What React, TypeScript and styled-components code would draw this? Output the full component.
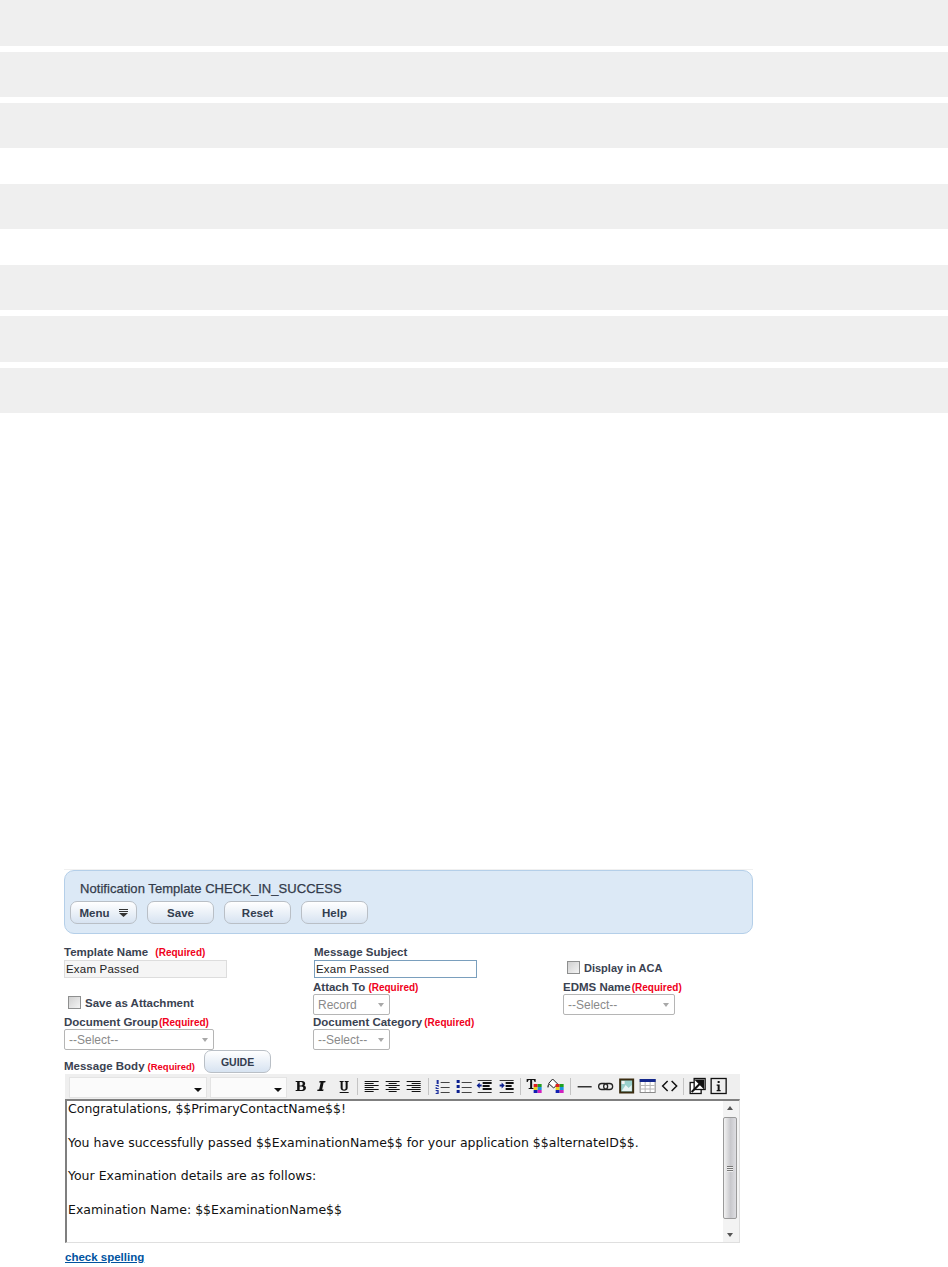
import React from 'react'
import styled, { createGlobalStyle } from 'styled-components'

const GlobalStyle = createGlobalStyle`
  html, body {
    margin: 0;
    padding: 0;
    background: #fff;
    font-family: "Liberation Sans", Arial, sans-serif;
  }
`

const Page = styled.div`
  width: 948px;
  height: 1267px;
  overflow: hidden;
`

const Bar = styled.div<{ $h: number; $gap: number }>`
  height: ${(p) => p.$h}px;
  margin-bottom: ${(p) => p.$gap}px;
  background: #efefef;
`

const Content = styled.div`
  margin-top: 456px;
  margin-left: 64px;
  width: 689px;
`

const TopLine = styled.div`
  height: 1px;
  background: #f0f0f0;
`

const Panel = styled.div`
  box-sizing: border-box;
  height: 64px;
  border: 1px solid #b4cfe9;
  border-radius: 10px;
  background: #dce9f6;
  padding: 10px 5px 0;
`

const Title = styled.div`
  margin-left: 10px;
  font-size: 13px;
  line-height: 15px;
  font-weight: 400;
  letter-spacing: 0.05px;
  -webkit-text-stroke: 0.25px #333b4a;
  color: #333b4a;
`

const ButtonRow = styled.div`
  display: flex;
  gap: 10px;
  margin-top: 5px;
`

const Button = styled.div`
  box-sizing: border-box;
  flex: none;
  width: 67px;
  height: 23px;
  display: flex;
  align-items: center;
  justify-content: center;
  gap: 9px;
  border: 1px solid #b9bfc6;
  border-radius: 7px;
  background: linear-gradient(#ffffff, #d7e3f1);
  font-size: 11.5px;
  font-weight: 700;
  color: #333d4f;
`

const FormGrid = styled.div`
  display: grid;
  grid-template-columns: 249px 250px 1fr;
  grid-template-rows: 35px 35px 35px;
  margin-top: 11px;
`

const Field = styled.div<{ $shift?: number }>`
  display: flex;
  flex-direction: column;
  align-items: flex-start;
  margin-left: ${(p) => p.$shift ?? 0}px;
`

const Label = styled.div`
  height: 14px;
  font-size: 11.5px;
  line-height: 14px;
  font-weight: 700;
  color: #3a4251;
  white-space: nowrap;
`

const Required = styled.span<{ $gap?: number; $size?: number }>`
  margin-left: ${(p) => p.$gap ?? 1}px;
  font-size: ${(p) => p.$size ?? 10}px;
  font-weight: 700;
  color: #f00020;
`

const TextBox = styled.div<{ $focus?: boolean }>`
  box-sizing: border-box;
  flex: none;
  width: 163px;
  height: 18px;
  margin-top: 1px;
  padding-left: 1px;
  border: 1px solid ${(p) => (p.$focus ? '#7a9fbd' : '#dddddd')};
  background: ${(p) => (p.$focus ? '#fff' : '#f5f5f5')};
  font-size: 11.5px;
  line-height: 16px;
  letter-spacing: 0.2px;
  color: #222;
`

const Select = styled.div<{ $w: number }>`
  box-sizing: border-box;
  flex: none;
  width: ${(p) => p.$w}px;
  height: 21px;
  display: flex;
  align-items: center;
  justify-content: space-between;
  padding: 0 5px 0 4px;
  border: 1px solid #b5b5b5;
  border-radius: 2px;
  background: #fff;
  font-size: 12px;
  color: #8a8a8a;
`

const Caret = styled.span`
  width: 0;
  height: 0;
  border-left: 3.5px solid transparent;
  border-right: 3.5px solid transparent;
  border-top: 4px solid #a8a8a8;
`

const CheckRow = styled.div<{ $left: number; $top: number; $size: number }>`
  display: flex;
  align-items: center;
  align-self: start;
  gap: 4px;
  margin-left: ${(p) => p.$left}px;
  margin-top: ${(p) => p.$top}px;
  font-size: ${(p) => p.$size}px;
  font-weight: 700;
  color: #3a4251;
  white-space: nowrap;
`

const CheckBox = styled.span`
  box-sizing: border-box;
  flex: none;
  width: 13px;
  height: 13px;
  border: 1px solid #8e8f8f;
  background: linear-gradient(135deg, #d0d0d0, #f4f4f4);
`

const BodyHead = styled.div`
  display: flex;
  align-items: flex-start;
  height: 24px;
`

const BodyLabel = styled(Label)`
  margin-top: 9px;
`

const GuideButton = styled(Button)`
  margin-left: 9px;
  font-size: 10.5px;
`

const Editor = styled.div`
  width: 675px;
  margin-left: 1px;
`

const Toolbar = styled.div`
  box-sizing: border-box;
  height: 25px;
  display: flex;
  align-items: center;
  padding-left: 4px;
  background: #efefef;
`

const FontSelect = styled.div<{ $w: number }>`
  box-sizing: border-box;
  width: ${(p) => p.$w}px;
  height: 21px;
  margin-right: 3px;
  margin-top: 2px;
  display: flex;
  align-items: center;
  justify-content: flex-end;
  padding-right: 4px;
  background: #fbfbfb;
  border: 1px solid #e4e4e4;
`

const FontCaret = styled.span`
  width: 0;
  height: 0;
  margin-top: 4px;
  border-left: 4px solid transparent;
  border-right: 4px solid transparent;
  border-top: 4px solid #111;
`

const ToolIcon = styled.svg`
  flex: none;
  width: 21.3px;
  height: 20px;
  margin-top: -1px;
`

const Separator = styled.span`
  flex: none;
  width: 1px;
  height: 17px;
  margin: 0 3px;
  background: #c4c4c4;
`

const EditArea = styled.div`
  box-sizing: border-box;
  height: 144px;
  display: flex;
  border-top: 2px solid #7f7f7f;
  border-left: 2px solid #7f7f7f;
  border-bottom: 1px solid #dfdfdf;
  border-right: 1px solid #dfdfdf;
`

const Message = styled.div`
  flex: 1;
  overflow: hidden;
  padding: 0 0 0 1px;
  font-family: "DejaVu Sans", Verdana, sans-serif;
  font-size: 12.5px;
  line-height: 16.8px;
  color: #111;
  white-space: pre;
`

const ScrollTrack = styled.div`
  box-sizing: border-box;
  flex: none;
  width: 16px;
  display: flex;
  flex-direction: column;
  align-items: flex-start;
  background: #f3f3f3;
  padding-top: 5px;
`

const ScrollArrow = styled.span<{ $up?: boolean }>`
  width: 0;
  height: 0;
  margin-left: 4px;
  border-left: 3.5px solid transparent;
  border-right: 3.5px solid transparent;
  ${(p) => (p.$up ? 'border-bottom' : 'border-top')}: 4px solid #555;
`

const ScrollThumb = styled.div`
  box-sizing: border-box;
  width: 14px;
  height: 102px;
  margin: 7px 0 14px;
  display: flex;
  flex-direction: column;
  align-items: center;
  justify-content: center;
  gap: 1px;
  border: 1px solid #9a9a9a;
  border-radius: 2px;
  background: linear-gradient(90deg, #f2f2f2, #c8c8cc 55%, #dedee2);
`

const Grip = styled.span`
  width: 6px;
  height: 1px;
  background: #777;
  box-shadow: 0 1px 0 #eee;
`

const SpellLink = styled.a`
  display: block;
  margin: 7px 0 0 1px;
  font-size: 11.5px;
  line-height: 14px;
  font-weight: 700;
  color: #00539f;
  text-decoration: underline;
`

const lines = (ys: number[], spans: [number, number][], color = '#111') =>
  ys.map((y, i) => <rect key={i} x={spans[i % spans.length][0]} y={y} width={spans[i % spans.length][1]} height={1} fill={color} />)

const icons: Record<string, React.ReactNode> = {
  bold: <path d="M5 5h6.500c3 0 4 3 2 4.500 3 1 2 5.500-1.500 5.500H5v-1h1.500V6H5zM9 6v3.500h1.500c2 0 2-3.500 0-3.500zM9 10.500V14h2c2.200 0 2.200-3.500 0-3.500z" fill="#111" />,
  italic: <path d="M8 5h6l-.5 1.500H12L10.500 13.500H12L11.500 15h-6L6 13.500h1.500L9 6.500H7.500z" fill="#111" />,
  underline: (
    <>
      <path d="M6 5h4v1H9v6c0 2 3 2 3 0V6h-1V5h4v1h-1v6c0 3.500-7 3.500-7 0V6H6z" fill="#111" />
      <rect x="6" y="16" width="9" height="1" fill="#111" />
    </>
  ),
  left: <>{lines([5, 7, 9, 11, 13, 15], [[3, 14], [3, 9], [3, 14], [3, 9], [3, 14], [3, 9]])}</>,
  center: <>{lines([5, 7, 9, 11, 13, 15], [[3, 14], [6, 8], [3, 14], [6, 8], [3, 14], [6, 8]])}</>,
  right: <>{lines([5, 7, 9, 11, 13, 15], [[3, 14], [8, 9], [3, 14], [8, 9], [3, 14], [8, 9]])}</>,
  ol: (
    <>
      <path d="M4 4h2v4H4zM3 9h3v2H4v1h2v1H3v-2h2v-1H3zM3 14h3v4H3v-1h2v-.5H4v-1h1V15H3z" fill="#1c2f9c" />
      {lines([6, 11, 16], [[8, 9]], '#444')}
    </>
  ),
  ul: (
    <>
      <rect x="3" y="4" width="3" height="3" fill="#0b1f8f" />
      <rect x="3" y="9" width="3" height="3" fill="#0b1f8f" />
      <rect x="3" y="14" width="3" height="3" fill="#0b1f8f" />
      {lines([6, 11, 16], [[8, 10]], '#444')}
    </>
  ),
  outdent: (
    <>
      <path d="M2 9.500l3-3v2h2v2H5v2z" fill="#0b1f8f" />
      {lines([4, 16], [[3, 14]], '#333')}
      <rect x="8" y="6" width="9" height="2" fill="#111" />
      <rect x="8" y="9" width="7" height="2" fill="#111" />
      <rect x="8" y="12" width="9" height="2" fill="#111" />
    </>
  ),
  indent: (
    <>
      <path d="M8 9.500l-3-3v2H3v2h2v2z" fill="#0b1f8f" />
      {lines([4, 16], [[3, 14]], '#333')}
      <rect x="9" y="6" width="8" height="2" fill="#111" />
      <rect x="9" y="9" width="6" height="2" fill="#111" />
      <rect x="9" y="12" width="8" height="2" fill="#111" />
    </>
  ),
  textColor: (
    <>
      <path d="M2 3h9v3h-1l-1-2H7.500v8H9v1H4v-1h1.500V4H4L3 6H2z" fill="#111" />
      <rect x="9" y="8" width="4" height="3" fill="#e02020" />
      <rect x="13" y="8" width="4" height="3" fill="#20a020" />
      <rect x="9" y="11" width="4" height="3" fill="#e8d020" />
      <rect x="13" y="11" width="4" height="3" fill="#2090e0" />
      <rect x="9" y="14" width="4" height="3" fill="#1020b0" />
      <rect x="13" y="14" width="4" height="3" fill="#d020c0" />
    </>
  ),
  fillColor: (
    <>
      <path d="M7 3l5 5-4 4-5-4.500z" fill="#fff" stroke="#222" />
      <path d="M3 7.500c-1 2-2 3-1 4s2-2 1-4z" fill="#444" />
      <rect x="10" y="8" width="4" height="3" fill="#e02020" />
      <rect x="14" y="8" width="4" height="3" fill="#20a020" />
      <rect x="10" y="11" width="4" height="3" fill="#e8d020" />
      <rect x="14" y="11" width="4" height="3" fill="#2090e0" />
      <rect x="10" y="14" width="4" height="3" fill="#1020b0" />
      <rect x="14" y="14" width="4" height="3" fill="#d020c0" />
    </>
  ),
  hr: <rect x="3" y="10" width="14" height="1.500" fill="#333" />,
  link: (
    <>
      <rect x="3" y="7.500" width="9" height="6" rx="3" fill="none" stroke="#222" strokeWidth="1.300" />
      <rect x="8" y="7.500" width="9" height="6" rx="3" fill="none" stroke="#222" strokeWidth="1.300" />
    </>
  ),
  image: (
    <>
      <rect x="3.500" y="3.500" width="13" height="13" fill="#9ad0cc" stroke="#3a2c10" strokeWidth="2" />
      <path d="M5 15l4-6 3 3 3-3v6z" fill="#e8f4f4" />
      <rect x="5" y="5" width="3" height="3" fill="#f4f4f4" />
    </>
  ),
  table: (
    <>
      <rect x="2.500" y="3.500" width="15" height="13" fill="#fff" stroke="#8a8a8a" />
      <rect x="2" y="3" width="16" height="3" fill="#14288c" />
      <path d="M3 9.500h14M3 13h14M7.500 6v10M12.500 6v10" stroke="#b8b8b8" fill="none" />
    </>
  ),
  code: <path d="M8 5l-5 5 5 5M12 5l5 5-5 5" fill="none" stroke="#111" strokeWidth="1.500" />,
  fullscreen: (
    <>
      <rect x="2.500" y="6.500" width="11" height="11" fill="#fff" stroke="#111" strokeWidth="1.300" />
      <rect x="6.500" y="2.500" width="11" height="11" fill="#fff" stroke="#111" strokeWidth="1.300" />
      <path d="M4 16L14 6M9 4.500h6.500V11z" stroke="#111" strokeWidth="2" fill="#111" />
    </>
  ),
  info: (
    <>
      <rect x="2.500" y="2.500" width="15" height="15" fill="none" stroke="#111" strokeWidth="1.300" />
      <rect x="9" y="5" width="2" height="2" fill="#111" />
      <path d="M8 8.500h3V14h1v1.200H8V14h1V9.700H8z" fill="#111" />
    </>
  ),
}

const toolGroups = [
  ['bold', 'italic', 'underline'],
  ['left', 'center', 'right'],
  ['ol', 'ul', 'outdent', 'indent'],
  ['textColor', 'fillColor'],
  ['hr', 'link', 'image', 'table', 'code'],
  ['fullscreen', 'info'],
]

const bars = [
  { h: 46, gap: 6 },
  { h: 45, gap: 6 },
  { h: 45, gap: 36 },
  { h: 45, gap: 36 },
  { h: 45, gap: 6 },
  { h: 46, gap: 6 },
  { h: 45, gap: 0 },
]

const App = () => {
  return (
    <Page>
      <GlobalStyle />
      {bars.map((b, i) => (
        <Bar key={i} $h={b.h} $gap={b.gap} />
      ))}
      <Content>
        <TopLine />
        <Panel>
          <Title>Notification Template CHECK_IN_SUCCESS</Title>
          <ButtonRow>
            <Button>
              Menu
              <svg width="9" height="8" viewBox="0 0 9 8">
                <rect x="0" y="0" width="9" height="1" fill="#333" />
                <rect x="0" y="2" width="9" height="1" fill="#333" />
                <path d="M0 4h9L4.500 8z" fill="#333" />
              </svg>
            </Button>
            <Button>Save</Button>
            <Button>Reset</Button>
            <Button>Help</Button>
          </ButtonRow>
        </Panel>
        <FormGrid>
          <Field>
            <Label>
              Template Name <Required $gap={4}>(Required)</Required>
            </Label>
            <TextBox>Exam Passed</TextBox>
          </Field>
          <Field $shift={1}>
            <Label>Message Subject</Label>
            <TextBox $focus>Exam Passed</TextBox>
          </Field>
          <CheckRow $left={4} $top={16} $size={11}>
            <CheckBox />
            Display in ACA
          </CheckRow>

          <CheckRow $left={4} $top={16} $size={11.5}>
            <CheckBox />
            Save as Attachment
          </CheckRow>
          <Field>
            <Label>
              Attach To <Required $gap={0}>(Required)</Required>
            </Label>
            <Select $w={77}>
              Record
              <Caret />
            </Select>
          </Field>
          <Field>
            <Label>
              EDMS Name<Required>(Required)</Required>
            </Label>
            <Select $w={112}>
              --Select--
              <Caret />
            </Select>
          </Field>

          <Field>
            <Label>
              Document Group<Required>(Required)</Required>
            </Label>
            <Select $w={150}>
              --Select--
              <Caret />
            </Select>
          </Field>
          <Field>
            <Label>
              Document Category<Required $gap={2}>(Required)</Required>
            </Label>
            <Select $w={77}>
              --Select--
              <Caret />
            </Select>
          </Field>
        </FormGrid>
        <BodyHead>
          <BodyLabel>
            Message Body<Required $gap={3} $size={9.5}>(Required)</Required>
          </BodyLabel>
          <GuideButton>GUIDE</GuideButton>
        </BodyHead>
        <Editor>
          <Toolbar>
            <FontSelect $w={138}>
              <FontCaret />
            </FontSelect>
            <FontSelect $w={77}>
              <FontCaret />
            </FontSelect>
            {toolGroups.map((group, gi) => (
              <React.Fragment key={gi}>
                {gi > 0 && <Separator />}
                {group.map((name) => (
                  <ToolIcon key={name} viewBox="0 0 20 20">
                    {icons[name]}
                  </ToolIcon>
                ))}
              </React.Fragment>
            ))}
          </Toolbar>
          <EditArea>
            <Message>
              {'Congratulations, $$PrimaryContactName$$!\n\nYou have successfully passed $$ExaminationName$$ for your application $$alternateID$$.\n\nYour Examination details are as follows:\n\nExamination Name: $$ExaminationName$$'}
            </Message>
            <ScrollTrack>
              <ScrollArrow $up />
              <ScrollThumb>
                <Grip />
                <Grip />
                <Grip />
              </ScrollThumb>
              <ScrollArrow />
            </ScrollTrack>
          </EditArea>
        </Editor>
        <SpellLink>check spelling</SpellLink>
      </Content>
    </Page>
  )
}

export default App
